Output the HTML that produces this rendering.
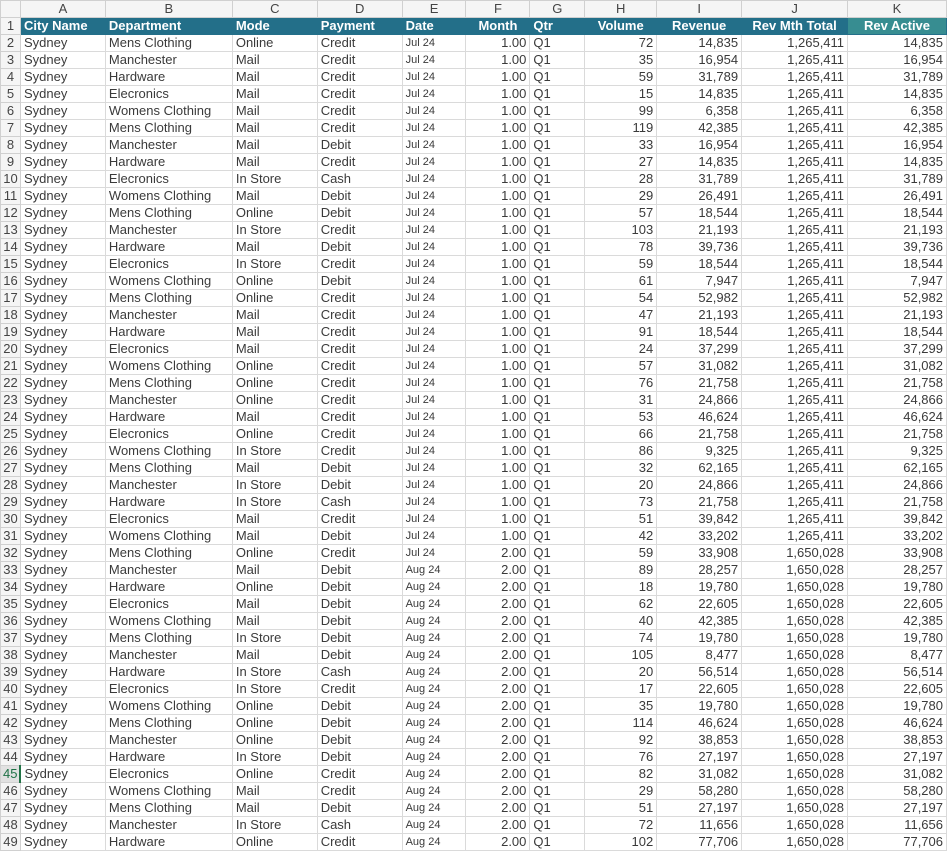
<!DOCTYPE html>
<html><head><meta charset="utf-8"><style>
html,body{margin:0;padding:0;background:#fff;width:947px;height:852px;overflow:hidden}
table{border-collapse:collapse;table-layout:fixed;font-family:"Liberation Sans",Arial,sans-serif;font-size:13px;color:#3a3a3a}
td{height:16px;line-height:16px;padding:0 3px;border:1px solid #dadada;white-space:nowrap;overflow:hidden}
tr.ch td{background:#f5f5f5;text-align:center;color:#444;font-size:13px;border-color:#d0d0d0}
td.rn{background:#f5f5f5;text-align:center;padding:0;color:#444;border-color:#d0d0d0}
tr.h td{background:#236f89;color:#fff;font-weight:bold;border-color:#236f89}
tr.h td.rn{background:#f5f5f5;color:#444;font-weight:normal;border-color:#d0d0d0}
tr.h td.k{background:#378d91}
tr.h td.c{text-align:center}
.r{text-align:right}
.d{font-size:11px}
td.sel{color:#1e7145;background:#e1e1e1;border-right:2px solid #217346}
</style></head><body>
<table>
<colgroup><col style="width:20px"><col style="width:85px"><col style="width:127px"><col style="width:85px"><col style="width:85px"><col style="width:64px"><col style="width:64px"><col style="width:55px"><col style="width:72px"><col style="width:85px"><col style="width:106px"><col style="width:99px"></colgroup>
<tr class="ch"><td></td><td>A</td><td>B</td><td>C</td><td>D</td><td>E</td><td>F</td><td>G</td><td>H</td><td>I</td><td>J</td><td>K</td></tr>
<tr class="h"><td class="rn">1</td><td>City Name</td><td>Department</td><td>Mode</td><td>Payment</td><td>Date</td><td class="c">Month</td><td>Qtr</td><td class="c">Volume</td><td class="c">Revenue</td><td class="c">Rev Mth Total</td><td class="c k">Rev Active</td></tr>
<tr><td class="rn">2</td><td>Sydney</td><td>Mens Clothing</td><td>Online</td><td>Credit</td><td class="d">Jul 24</td><td class="r">1.00</td><td>Q1</td><td class="r">72</td><td class="r">14,835</td><td class="r">1,265,411</td><td class="r">14,835</td></tr>
<tr><td class="rn">3</td><td>Sydney</td><td>Manchester</td><td>Mail</td><td>Credit</td><td class="d">Jul 24</td><td class="r">1.00</td><td>Q1</td><td class="r">35</td><td class="r">16,954</td><td class="r">1,265,411</td><td class="r">16,954</td></tr>
<tr><td class="rn">4</td><td>Sydney</td><td>Hardware</td><td>Mail</td><td>Credit</td><td class="d">Jul 24</td><td class="r">1.00</td><td>Q1</td><td class="r">59</td><td class="r">31,789</td><td class="r">1,265,411</td><td class="r">31,789</td></tr>
<tr><td class="rn">5</td><td>Sydney</td><td>Elecronics</td><td>Mail</td><td>Credit</td><td class="d">Jul 24</td><td class="r">1.00</td><td>Q1</td><td class="r">15</td><td class="r">14,835</td><td class="r">1,265,411</td><td class="r">14,835</td></tr>
<tr><td class="rn">6</td><td>Sydney</td><td>Womens Clothing</td><td>Mail</td><td>Credit</td><td class="d">Jul 24</td><td class="r">1.00</td><td>Q1</td><td class="r">99</td><td class="r">6,358</td><td class="r">1,265,411</td><td class="r">6,358</td></tr>
<tr><td class="rn">7</td><td>Sydney</td><td>Mens Clothing</td><td>Mail</td><td>Credit</td><td class="d">Jul 24</td><td class="r">1.00</td><td>Q1</td><td class="r">119</td><td class="r">42,385</td><td class="r">1,265,411</td><td class="r">42,385</td></tr>
<tr><td class="rn">8</td><td>Sydney</td><td>Manchester</td><td>Mail</td><td>Debit</td><td class="d">Jul 24</td><td class="r">1.00</td><td>Q1</td><td class="r">33</td><td class="r">16,954</td><td class="r">1,265,411</td><td class="r">16,954</td></tr>
<tr><td class="rn">9</td><td>Sydney</td><td>Hardware</td><td>Mail</td><td>Credit</td><td class="d">Jul 24</td><td class="r">1.00</td><td>Q1</td><td class="r">27</td><td class="r">14,835</td><td class="r">1,265,411</td><td class="r">14,835</td></tr>
<tr><td class="rn">10</td><td>Sydney</td><td>Elecronics</td><td>In Store</td><td>Cash</td><td class="d">Jul 24</td><td class="r">1.00</td><td>Q1</td><td class="r">28</td><td class="r">31,789</td><td class="r">1,265,411</td><td class="r">31,789</td></tr>
<tr><td class="rn">11</td><td>Sydney</td><td>Womens Clothing</td><td>Mail</td><td>Debit</td><td class="d">Jul 24</td><td class="r">1.00</td><td>Q1</td><td class="r">29</td><td class="r">26,491</td><td class="r">1,265,411</td><td class="r">26,491</td></tr>
<tr><td class="rn">12</td><td>Sydney</td><td>Mens Clothing</td><td>Online</td><td>Debit</td><td class="d">Jul 24</td><td class="r">1.00</td><td>Q1</td><td class="r">57</td><td class="r">18,544</td><td class="r">1,265,411</td><td class="r">18,544</td></tr>
<tr><td class="rn">13</td><td>Sydney</td><td>Manchester</td><td>In Store</td><td>Credit</td><td class="d">Jul 24</td><td class="r">1.00</td><td>Q1</td><td class="r">103</td><td class="r">21,193</td><td class="r">1,265,411</td><td class="r">21,193</td></tr>
<tr><td class="rn">14</td><td>Sydney</td><td>Hardware</td><td>Mail</td><td>Debit</td><td class="d">Jul 24</td><td class="r">1.00</td><td>Q1</td><td class="r">78</td><td class="r">39,736</td><td class="r">1,265,411</td><td class="r">39,736</td></tr>
<tr><td class="rn">15</td><td>Sydney</td><td>Elecronics</td><td>In Store</td><td>Credit</td><td class="d">Jul 24</td><td class="r">1.00</td><td>Q1</td><td class="r">59</td><td class="r">18,544</td><td class="r">1,265,411</td><td class="r">18,544</td></tr>
<tr><td class="rn">16</td><td>Sydney</td><td>Womens Clothing</td><td>Online</td><td>Debit</td><td class="d">Jul 24</td><td class="r">1.00</td><td>Q1</td><td class="r">61</td><td class="r">7,947</td><td class="r">1,265,411</td><td class="r">7,947</td></tr>
<tr><td class="rn">17</td><td>Sydney</td><td>Mens Clothing</td><td>Online</td><td>Credit</td><td class="d">Jul 24</td><td class="r">1.00</td><td>Q1</td><td class="r">54</td><td class="r">52,982</td><td class="r">1,265,411</td><td class="r">52,982</td></tr>
<tr><td class="rn">18</td><td>Sydney</td><td>Manchester</td><td>Mail</td><td>Credit</td><td class="d">Jul 24</td><td class="r">1.00</td><td>Q1</td><td class="r">47</td><td class="r">21,193</td><td class="r">1,265,411</td><td class="r">21,193</td></tr>
<tr><td class="rn">19</td><td>Sydney</td><td>Hardware</td><td>Mail</td><td>Credit</td><td class="d">Jul 24</td><td class="r">1.00</td><td>Q1</td><td class="r">91</td><td class="r">18,544</td><td class="r">1,265,411</td><td class="r">18,544</td></tr>
<tr><td class="rn">20</td><td>Sydney</td><td>Elecronics</td><td>Mail</td><td>Credit</td><td class="d">Jul 24</td><td class="r">1.00</td><td>Q1</td><td class="r">24</td><td class="r">37,299</td><td class="r">1,265,411</td><td class="r">37,299</td></tr>
<tr><td class="rn">21</td><td>Sydney</td><td>Womens Clothing</td><td>Online</td><td>Credit</td><td class="d">Jul 24</td><td class="r">1.00</td><td>Q1</td><td class="r">57</td><td class="r">31,082</td><td class="r">1,265,411</td><td class="r">31,082</td></tr>
<tr><td class="rn">22</td><td>Sydney</td><td>Mens Clothing</td><td>Online</td><td>Credit</td><td class="d">Jul 24</td><td class="r">1.00</td><td>Q1</td><td class="r">76</td><td class="r">21,758</td><td class="r">1,265,411</td><td class="r">21,758</td></tr>
<tr><td class="rn">23</td><td>Sydney</td><td>Manchester</td><td>Online</td><td>Credit</td><td class="d">Jul 24</td><td class="r">1.00</td><td>Q1</td><td class="r">31</td><td class="r">24,866</td><td class="r">1,265,411</td><td class="r">24,866</td></tr>
<tr><td class="rn">24</td><td>Sydney</td><td>Hardware</td><td>Mail</td><td>Credit</td><td class="d">Jul 24</td><td class="r">1.00</td><td>Q1</td><td class="r">53</td><td class="r">46,624</td><td class="r">1,265,411</td><td class="r">46,624</td></tr>
<tr><td class="rn">25</td><td>Sydney</td><td>Elecronics</td><td>Online</td><td>Credit</td><td class="d">Jul 24</td><td class="r">1.00</td><td>Q1</td><td class="r">66</td><td class="r">21,758</td><td class="r">1,265,411</td><td class="r">21,758</td></tr>
<tr><td class="rn">26</td><td>Sydney</td><td>Womens Clothing</td><td>In Store</td><td>Credit</td><td class="d">Jul 24</td><td class="r">1.00</td><td>Q1</td><td class="r">86</td><td class="r">9,325</td><td class="r">1,265,411</td><td class="r">9,325</td></tr>
<tr><td class="rn">27</td><td>Sydney</td><td>Mens Clothing</td><td>Mail</td><td>Debit</td><td class="d">Jul 24</td><td class="r">1.00</td><td>Q1</td><td class="r">32</td><td class="r">62,165</td><td class="r">1,265,411</td><td class="r">62,165</td></tr>
<tr><td class="rn">28</td><td>Sydney</td><td>Manchester</td><td>In Store</td><td>Debit</td><td class="d">Jul 24</td><td class="r">1.00</td><td>Q1</td><td class="r">20</td><td class="r">24,866</td><td class="r">1,265,411</td><td class="r">24,866</td></tr>
<tr><td class="rn">29</td><td>Sydney</td><td>Hardware</td><td>In Store</td><td>Cash</td><td class="d">Jul 24</td><td class="r">1.00</td><td>Q1</td><td class="r">73</td><td class="r">21,758</td><td class="r">1,265,411</td><td class="r">21,758</td></tr>
<tr><td class="rn">30</td><td>Sydney</td><td>Elecronics</td><td>Mail</td><td>Credit</td><td class="d">Jul 24</td><td class="r">1.00</td><td>Q1</td><td class="r">51</td><td class="r">39,842</td><td class="r">1,265,411</td><td class="r">39,842</td></tr>
<tr><td class="rn">31</td><td>Sydney</td><td>Womens Clothing</td><td>Mail</td><td>Debit</td><td class="d">Jul 24</td><td class="r">1.00</td><td>Q1</td><td class="r">42</td><td class="r">33,202</td><td class="r">1,265,411</td><td class="r">33,202</td></tr>
<tr><td class="rn">32</td><td>Sydney</td><td>Mens Clothing</td><td>Online</td><td>Credit</td><td class="d">Jul 24</td><td class="r">2.00</td><td>Q1</td><td class="r">59</td><td class="r">33,908</td><td class="r">1,650,028</td><td class="r">33,908</td></tr>
<tr><td class="rn">33</td><td>Sydney</td><td>Manchester</td><td>Mail</td><td>Debit</td><td class="d">Aug 24</td><td class="r">2.00</td><td>Q1</td><td class="r">89</td><td class="r">28,257</td><td class="r">1,650,028</td><td class="r">28,257</td></tr>
<tr><td class="rn">34</td><td>Sydney</td><td>Hardware</td><td>Online</td><td>Debit</td><td class="d">Aug 24</td><td class="r">2.00</td><td>Q1</td><td class="r">18</td><td class="r">19,780</td><td class="r">1,650,028</td><td class="r">19,780</td></tr>
<tr><td class="rn">35</td><td>Sydney</td><td>Elecronics</td><td>Mail</td><td>Debit</td><td class="d">Aug 24</td><td class="r">2.00</td><td>Q1</td><td class="r">62</td><td class="r">22,605</td><td class="r">1,650,028</td><td class="r">22,605</td></tr>
<tr><td class="rn">36</td><td>Sydney</td><td>Womens Clothing</td><td>Mail</td><td>Debit</td><td class="d">Aug 24</td><td class="r">2.00</td><td>Q1</td><td class="r">40</td><td class="r">42,385</td><td class="r">1,650,028</td><td class="r">42,385</td></tr>
<tr><td class="rn">37</td><td>Sydney</td><td>Mens Clothing</td><td>In Store</td><td>Debit</td><td class="d">Aug 24</td><td class="r">2.00</td><td>Q1</td><td class="r">74</td><td class="r">19,780</td><td class="r">1,650,028</td><td class="r">19,780</td></tr>
<tr><td class="rn">38</td><td>Sydney</td><td>Manchester</td><td>Mail</td><td>Debit</td><td class="d">Aug 24</td><td class="r">2.00</td><td>Q1</td><td class="r">105</td><td class="r">8,477</td><td class="r">1,650,028</td><td class="r">8,477</td></tr>
<tr><td class="rn">39</td><td>Sydney</td><td>Hardware</td><td>In Store</td><td>Cash</td><td class="d">Aug 24</td><td class="r">2.00</td><td>Q1</td><td class="r">20</td><td class="r">56,514</td><td class="r">1,650,028</td><td class="r">56,514</td></tr>
<tr><td class="rn">40</td><td>Sydney</td><td>Elecronics</td><td>In Store</td><td>Credit</td><td class="d">Aug 24</td><td class="r">2.00</td><td>Q1</td><td class="r">17</td><td class="r">22,605</td><td class="r">1,650,028</td><td class="r">22,605</td></tr>
<tr><td class="rn">41</td><td>Sydney</td><td>Womens Clothing</td><td>Online</td><td>Debit</td><td class="d">Aug 24</td><td class="r">2.00</td><td>Q1</td><td class="r">35</td><td class="r">19,780</td><td class="r">1,650,028</td><td class="r">19,780</td></tr>
<tr><td class="rn">42</td><td>Sydney</td><td>Mens Clothing</td><td>Online</td><td>Debit</td><td class="d">Aug 24</td><td class="r">2.00</td><td>Q1</td><td class="r">114</td><td class="r">46,624</td><td class="r">1,650,028</td><td class="r">46,624</td></tr>
<tr><td class="rn">43</td><td>Sydney</td><td>Manchester</td><td>Online</td><td>Debit</td><td class="d">Aug 24</td><td class="r">2.00</td><td>Q1</td><td class="r">92</td><td class="r">38,853</td><td class="r">1,650,028</td><td class="r">38,853</td></tr>
<tr><td class="rn">44</td><td>Sydney</td><td>Hardware</td><td>In Store</td><td>Debit</td><td class="d">Aug 24</td><td class="r">2.00</td><td>Q1</td><td class="r">76</td><td class="r">27,197</td><td class="r">1,650,028</td><td class="r">27,197</td></tr>
<tr><td class="rn sel">45</td><td>Sydney</td><td>Elecronics</td><td>Online</td><td>Credit</td><td class="d">Aug 24</td><td class="r">2.00</td><td>Q1</td><td class="r">82</td><td class="r">31,082</td><td class="r">1,650,028</td><td class="r">31,082</td></tr>
<tr><td class="rn">46</td><td>Sydney</td><td>Womens Clothing</td><td>Mail</td><td>Credit</td><td class="d">Aug 24</td><td class="r">2.00</td><td>Q1</td><td class="r">29</td><td class="r">58,280</td><td class="r">1,650,028</td><td class="r">58,280</td></tr>
<tr><td class="rn">47</td><td>Sydney</td><td>Mens Clothing</td><td>Mail</td><td>Debit</td><td class="d">Aug 24</td><td class="r">2.00</td><td>Q1</td><td class="r">51</td><td class="r">27,197</td><td class="r">1,650,028</td><td class="r">27,197</td></tr>
<tr><td class="rn">48</td><td>Sydney</td><td>Manchester</td><td>In Store</td><td>Cash</td><td class="d">Aug 24</td><td class="r">2.00</td><td>Q1</td><td class="r">72</td><td class="r">11,656</td><td class="r">1,650,028</td><td class="r">11,656</td></tr>
<tr><td class="rn">49</td><td>Sydney</td><td>Hardware</td><td>Online</td><td>Credit</td><td class="d">Aug 24</td><td class="r">2.00</td><td>Q1</td><td class="r">102</td><td class="r">77,706</td><td class="r">1,650,028</td><td class="r">77,706</td></tr>
</table>
</body></html>
